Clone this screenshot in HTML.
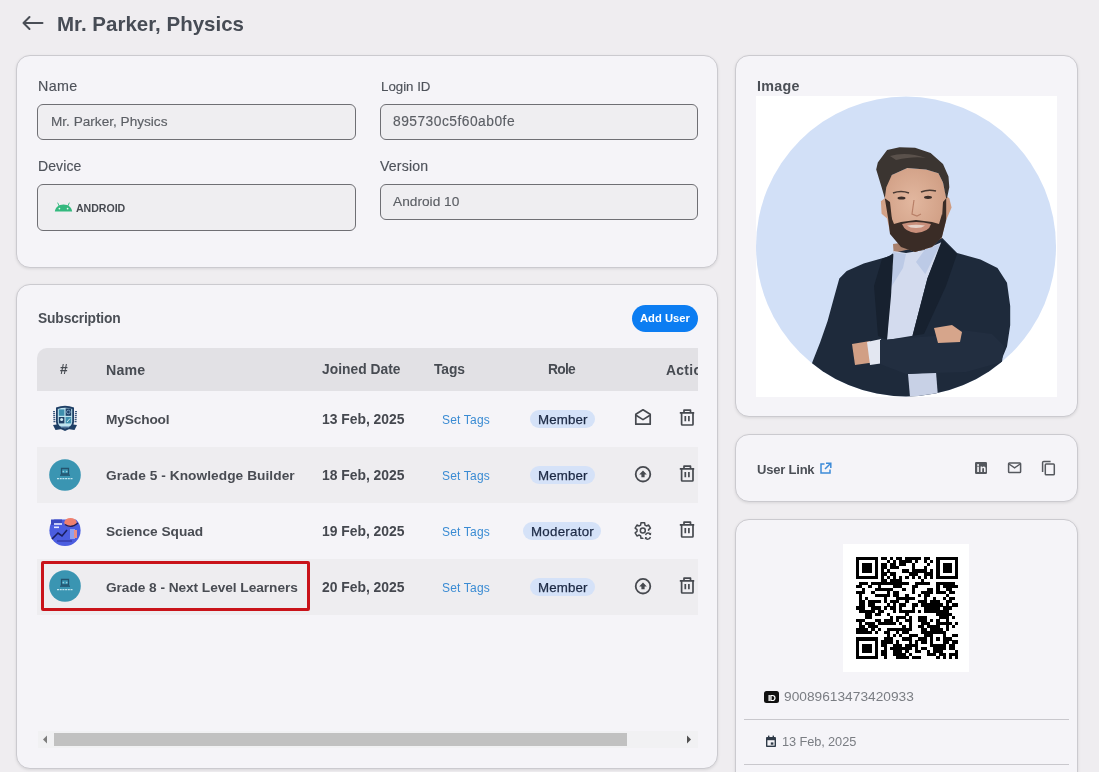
<!DOCTYPE html>
<html><head><meta charset="utf-8"><style>
*{box-sizing:border-box;margin:0;padding:0}
html,body{width:1099px;height:772px;overflow:hidden;background:#efedf0;font-family:"Liberation Sans",sans-serif}
.a{position:absolute}
.t{position:absolute;white-space:nowrap;line-height:1;will-change:transform}
.card{position:absolute;background:#f5f4f8;border:1px solid #cbcacf;border-radius:14px;box-shadow:0 1px 3px rgba(0,0,0,.10)}
.inp{position:absolute;background:#efeef1;border:1px solid #6f6f74;border-radius:6px}
.row{position:absolute;left:37px;width:661px;height:56px}
.chip{position:absolute;background:#d5e2f8;border-radius:9px;height:18px}
</style></head><body>
<svg class="a" style="left:21px;top:14px" width="24" height="18" viewBox="0 0 24 18"><path d="M21.5 9H2.5M8.5 3L2.5 9l6 6" fill="none" stroke="#4a4e56" stroke-width="2" stroke-linecap="round" stroke-linejoin="round"/></svg>
<div class="t" style="left:57.30px;top:14.15px;font-size:20.5px;font-weight:700;color:#474c55;letter-spacing:0.006px;">Mr. Parker, Physics</div>
<div class="card" style="left:16px;top:55px;width:702px;height:213px"></div>
<div class="t" style="left:37.90px;top:78.90px;font-size:14.3px;font-weight:400;color:#4e525a;letter-spacing:0.383px;-webkit-text-stroke:0.15px #4e525a;">Name</div>
<div class="inp" style="left:37px;top:104px;width:319px;height:36px"></div>
<div class="t" style="left:50.90px;top:115.39px;font-size:13.6px;font-weight:400;color:#5b5e64;letter-spacing:0.006px;-webkit-text-stroke:0.15px #5b5e64;">Mr. Parker, Physics</div>
<div class="t" style="left:380.50px;top:79.74px;font-size:13.3px;font-weight:400;color:#4e525a;letter-spacing:-0.007px;-webkit-text-stroke:0.15px #4e525a;">Login ID</div>
<div class="inp" style="left:380px;top:104px;width:318px;height:36px"></div>
<div class="t" style="left:393.30px;top:115.32px;font-size:13.8px;font-weight:400;color:#5b5e64;letter-spacing:0.483px;-webkit-text-stroke:0.15px #5b5e64;">895730c5f60ab0fe</div>
<div class="t" style="left:37.90px;top:158.85px;font-size:14.0px;font-weight:400;color:#4e525a;letter-spacing:0.100px;-webkit-text-stroke:0.15px #4e525a;">Device</div>
<div class="inp" style="left:37px;top:184px;width:319px;height:47px"></div>
<svg class="a" style="left:54px;top:201px" width="19" height="11" viewBox="0 0 19 11"><path d="M0.8 10.6C1.2 6.2 4.8 3.4 9.5 3.4S17.8 6.2 18.2 10.6Z" fill="#34b97f"/><path d="M5 4.6L3.8 2M14 4.6L15.2 2" stroke="#34b97f" stroke-width="0.9" stroke-linecap="round"/><circle cx="5.4" cy="7.6" r="0.85" fill="#eef6f1"/><circle cx="13.6" cy="7.6" r="0.85" fill="#eef6f1"/></svg>
<div class="t" style="left:76.10px;top:202.83px;font-size:10.6px;font-weight:700;color:#474a51;letter-spacing:-0.042px;">ANDROID</div>
<div class="t" style="left:380.40px;top:159.06px;font-size:14.1px;font-weight:400;color:#4e525a;letter-spacing:0.175px;-webkit-text-stroke:0.15px #4e525a;">Version</div>
<div class="inp" style="left:380px;top:184px;width:318px;height:36px"></div>
<div class="t" style="left:393.20px;top:195.40px;font-size:13.7px;font-weight:400;color:#5b5e64;letter-spacing:0.017px;-webkit-text-stroke:0.15px #5b5e64;">Android 10</div>
<div class="card" style="left:16px;top:284px;width:702px;height:485px"></div>
<div class="t" style="left:37.70px;top:311.72px;font-size:13.8px;font-weight:700;color:#4b4f56;letter-spacing:-0.141px;">Subscription</div>
<div class="a" style="left:632px;top:305px;width:66px;height:27px;border-radius:14px;background:#0c7df2"></div>
<div class="t" style="left:640.00px;top:313.42px;font-size:11.2px;font-weight:700;color:#ffffff;letter-spacing:0.029px;">Add User</div>
<div class="a" style="left:37px;top:348px;width:661px;height:43px;background:#e2e1e5;border-top-left-radius:10px"></div>
<div class="t" style="left:59.70px;top:363.32px;font-size:13.8px;font-weight:700;color:#474b52;letter-spacing:0.000px;">#</div>
<div class="t" style="left:105.90px;top:362.98px;font-size:14.2px;font-weight:700;color:#474b52;letter-spacing:0.200px;">Name</div>
<div class="t" style="left:322.00px;top:363.32px;font-size:13.8px;font-weight:700;color:#474b52;letter-spacing:0.030px;">Joined Date</div>
<div class="t" style="left:433.70px;top:363.32px;font-size:13.8px;font-weight:700;color:#474b52;letter-spacing:-0.100px;">Tags</div>
<div class="t" style="left:548.20px;top:363.32px;font-size:13.8px;font-weight:700;color:#474b52;letter-spacing:-0.733px;">Role</div>
<div class="a" style="left:37px;top:348px;width:661px;height:42px;overflow:hidden">
<div class="t" style="left:629.10px;top:15.52px;font-size:13.8px;font-weight:700;color:#474b52;letter-spacing:0.35px">Action</div>
</div>
<div class="row" style="top:391px;background:#f5f4f8"></div>
<div class="row" style="top:447px;background:#eeedf0"></div>
<div class="row" style="top:503px;background:#f5f4f8"></div>
<div class="row" style="top:559px;background:#eeedf0"></div>
<div class="t" style="left:105.80px;top:412.80px;font-size:13.7px;font-weight:700;color:#494c53;letter-spacing:-0.143px;">MySchool</div>
<div class="t" style="left:322.00px;top:413.03px;font-size:13.9px;font-weight:700;color:#45484f;letter-spacing:-0.018px;">13 Feb, 2025</div>
<div class="t" style="left:442.00px;top:414.04px;font-size:12px;font-weight:400;color:#3a8bd3;letter-spacing:0.186px;">Set Tags</div>
<div class="chip" style="left:530px;top:410px;width:65px"></div>
<div class="t" style="left:537.50px;top:413.14px;font-size:13.3px;font-weight:400;color:#1d2a45;letter-spacing:0.140px;-webkit-text-stroke:0.25px #1d2a45;">Member</div>
<svg class="a" style="left:679px;top:409px" width="16" height="17" viewBox="0 0 16 17"><path d="M0.8 3.8H15.2M5 3.5V1.2H11.5V3.5M2.6 4V15.2C2.6 15.7 3 16 3.4 16H13.2C13.6 16 14 15.7 14 15.2V4M6.3 7V12.3M9.9 7V12.3" fill="none" stroke="#46494f" stroke-width="1.7" stroke-linejoin="round"/></svg>
<div class="t" style="left:105.80px;top:468.80px;font-size:13.7px;font-weight:700;color:#494c53;letter-spacing:0.060px;">Grade 5 - Knowledge Builder</div>
<div class="t" style="left:322.00px;top:469.03px;font-size:13.9px;font-weight:700;color:#45484f;letter-spacing:-0.018px;">18 Feb, 2025</div>
<div class="t" style="left:442.00px;top:470.04px;font-size:12px;font-weight:400;color:#3a8bd3;letter-spacing:0.186px;">Set Tags</div>
<div class="chip" style="left:530px;top:466px;width:65px"></div>
<div class="t" style="left:537.50px;top:469.14px;font-size:13.3px;font-weight:400;color:#1d2a45;letter-spacing:0.140px;-webkit-text-stroke:0.25px #1d2a45;">Member</div>
<svg class="a" style="left:679px;top:465px" width="16" height="17" viewBox="0 0 16 17"><path d="M0.8 3.8H15.2M5 3.5V1.2H11.5V3.5M2.6 4V15.2C2.6 15.7 3 16 3.4 16H13.2C13.6 16 14 15.7 14 15.2V4M6.3 7V12.3M9.9 7V12.3" fill="none" stroke="#46494f" stroke-width="1.7" stroke-linejoin="round"/></svg>
<div class="t" style="left:105.80px;top:524.80px;font-size:13.7px;font-weight:700;color:#494c53;letter-spacing:-0.013px;">Science Squad</div>
<div class="t" style="left:322.00px;top:525.03px;font-size:13.9px;font-weight:700;color:#45484f;letter-spacing:-0.018px;">19 Feb, 2025</div>
<div class="t" style="left:442.00px;top:526.04px;font-size:12px;font-weight:400;color:#3a8bd3;letter-spacing:0.186px;">Set Tags</div>
<div class="chip" style="left:523px;top:522px;width:78px"></div>
<div class="t" style="left:531.00px;top:525.14px;font-size:13.3px;font-weight:400;color:#1d2a45;letter-spacing:0.275px;-webkit-text-stroke:0.25px #1d2a45;">Moderator</div>
<svg class="a" style="left:679px;top:521px" width="16" height="17" viewBox="0 0 16 17"><path d="M0.8 3.8H15.2M5 3.5V1.2H11.5V3.5M2.6 4V15.2C2.6 15.7 3 16 3.4 16H13.2C13.6 16 14 15.7 14 15.2V4M6.3 7V12.3M9.9 7V12.3" fill="none" stroke="#46494f" stroke-width="1.7" stroke-linejoin="round"/></svg>
<div class="t" style="left:105.80px;top:580.80px;font-size:13.7px;font-weight:700;color:#494c53;letter-spacing:-0.050px;">Grade 8 - Next Level Learners</div>
<div class="t" style="left:322.00px;top:581.03px;font-size:13.9px;font-weight:700;color:#45484f;letter-spacing:-0.018px;">20 Feb, 2025</div>
<div class="t" style="left:442.00px;top:582.04px;font-size:12px;font-weight:400;color:#3a8bd3;letter-spacing:0.186px;">Set Tags</div>
<div class="chip" style="left:530px;top:578px;width:65px"></div>
<div class="t" style="left:537.50px;top:581.14px;font-size:13.3px;font-weight:400;color:#1d2a45;letter-spacing:0.140px;-webkit-text-stroke:0.25px #1d2a45;">Member</div>
<svg class="a" style="left:679px;top:577px" width="16" height="17" viewBox="0 0 16 17"><path d="M0.8 3.8H15.2M5 3.5V1.2H11.5V3.5M2.6 4V15.2C2.6 15.7 3 16 3.4 16H13.2C13.6 16 14 15.7 14 15.2V4M6.3 7V12.3M9.9 7V12.3" fill="none" stroke="#46494f" stroke-width="1.7" stroke-linejoin="round"/></svg>
<svg class="a" style="left:634px;top:408px" width="18" height="18" viewBox="0 0 18 18"><path d="M1.8 6.3L9 1.8L16.2 6.3V16.2H1.8Z" fill="none" stroke="#46494f" stroke-width="1.7" stroke-linejoin="round"/><path d="M2 7.2L9 11.6L16 7.2" fill="none" stroke="#46494f" stroke-width="1.7" stroke-linejoin="round"/></svg>
<svg class="a" style="left:634px;top:465px" width="18" height="18" viewBox="0 0 18 18"><circle cx="9" cy="9.2" r="7.3" fill="none" stroke="#46494f" stroke-width="1.8"/><path d="M9 5.6L5.2 9.6H7.4V12.3H10.6V9.6H12.8Z" fill="#46494f"/></svg>
<svg class="a" style="left:634px;top:577px" width="18" height="18" viewBox="0 0 18 18"><circle cx="9" cy="9.2" r="7.3" fill="none" stroke="#46494f" stroke-width="1.8"/><path d="M9 5.6L5.2 9.6H7.4V12.3H10.6V9.6H12.8Z" fill="#46494f"/></svg>
<svg class="a" style="left:630px;top:518px" width="26" height="26" viewBox="0 0 26 26"><defs><mask id="gm"><rect width="26" height="26" fill="#fff"/><circle cx="18" cy="18" r="5.2" fill="#000"/></mask></defs><g mask="url(#gm)"><path d="M10.63 7.12 L11.00 4.71 L14.60 4.71 L14.97 7.12 L16.37 7.93 L18.65 7.04 L20.45 10.16 L18.54 11.69 L18.54 13.31 L20.45 14.84 L18.65 17.96 L16.37 17.07 L14.97 17.88 L14.60 20.29 L11.00 20.29 L10.63 17.88 L9.23 17.07 L6.95 17.96 L5.15 14.84 L7.06 13.31 L7.06 11.69 L5.15 10.16 L6.95 7.04 L9.23 7.93Z" fill="none" stroke="#46494f" stroke-width="1.5" stroke-linejoin="round"/></g><circle cx="12.8" cy="12.5" r="2.5" fill="none" stroke="#46494f" stroke-width="1.5"/><path d="M15.6 17.2A2.7 2.7 0 0 1 20.6 16.4M20.4 19A2.7 2.7 0 0 1 15.4 19.8" fill="none" stroke="#46494f" stroke-width="1.4"/><path d="M21.2 14.6L21 17.2L18.6 16.6Z M14.8 21.6L15 19L17.4 19.6Z" fill="#46494f"/></svg>
<svg class="a" style="left:50px;top:403px" width="30" height="30" viewBox="0 0 30 30"><path d="M4 8L4.5 20M26 8L25.5 20" stroke="#3d5a80" stroke-width="2" stroke-dasharray="1.2 0.8"/><path d="M6 4.5Q15 1 24 4.5V19Q24 25 15 28Q6 25 6 19Z" fill="#1f3f66"/><path d="M7.8 6Q15 3.3 22.2 6V18.8Q22.2 23.6 15 26Q7.8 23.6 7.8 18.8Z" fill="#bfe3ef"/><rect x="8.8" y="6.4" width="5.6" height="6.4" fill="#3f8fae"/><rect x="15.6" y="5.4" width="5.6" height="7.4" fill="#1f3f66"/><rect x="8.8" y="14" width="5.6" height="6.4" fill="#1f3f66"/><rect x="15.6" y="14" width="5.6" height="6.4" fill="#3f8fae"/><circle cx="18.4" cy="9" r="1.8" fill="none" stroke="#8fb8d8" stroke-width="0.7"/><circle cx="11.6" cy="16.5" r="1.5" fill="#cfeaf3"/><path d="M17 19L20 15.5" stroke="#cfeaf3" stroke-width="1"/><path d="M3 22L7 21.5L9 24Q15 22.5 21 24L23 21.5L27 22L24.5 27L21 26.5Q15 24.8 9 26.5L5.5 27Z" fill="#1f3f66"/><rect x="11" y="23.2" width="8" height="1.2" fill="#8fb8d8"/></svg>
<svg class="a" style="left:49px;top:459px" width="32" height="32" viewBox="0 0 32 32"><circle cx="16" cy="16" r="15.8" fill="#3a95b2"/><path d="M12.5 9.5H19.5V15H12.5Z" fill="none" stroke="#24536e" stroke-width="1.3"/><path d="M11 16.2H21" stroke="#24536e" stroke-width="1.2"/><circle cx="14.3" cy="12.6" r="0.8" fill="#9ad0e0"/><circle cx="17.7" cy="12.6" r="0.8" fill="#9ad0e0"/><path d="M8 19.6H24" stroke="#bfe4ee" stroke-width="1.2" stroke-dasharray="2 0.7"/></svg>
<svg class="a" style="left:49px;top:570px" width="32" height="32" viewBox="0 0 32 32"><circle cx="16" cy="16" r="15.8" fill="#3a95b2"/><path d="M12.5 9.5H19.5V15H12.5Z" fill="none" stroke="#24536e" stroke-width="1.3"/><path d="M11 16.2H21" stroke="#24536e" stroke-width="1.2"/><circle cx="14.3" cy="12.6" r="0.8" fill="#9ad0e0"/><circle cx="17.7" cy="12.6" r="0.8" fill="#9ad0e0"/><path d="M8 19.6H24" stroke="#bfe4ee" stroke-width="1.2" stroke-dasharray="2 0.7"/></svg>
<svg class="a" style="left:48px;top:515px" width="34" height="32" viewBox="0 0 34 32"><defs><clipPath id="ssq"><rect x="0" y="4.5" width="34" height="30"/></clipPath></defs><g clip-path="url(#ssq)"><circle cx="17" cy="15.5" r="15.6" fill="#4b5de0"/><path d="M3 10H14V4H3Z" fill="#3a49c0"/><rect x="6" y="8" width="8" height="2" fill="#c7cdf7"/><rect x="6" y="11.5" width="5" height="1.6" fill="#e6e9ff"/><path d="M4 24L10 18L14 21L19 15" fill="none" stroke="#1b1f60" stroke-width="1.6"/><rect x="22" y="14" width="5" height="10" fill="#8fa0f0"/><rect x="26" y="15" width="3" height="8" fill="#e88f86"/><rect x="9" y="25" width="15" height="2" fill="#3a44b8"/></g><ellipse cx="22.5" cy="7.5" rx="6.2" ry="4.6" fill="#f0806e"/><path d="M17 9.5Q23 14 30 8" fill="none" stroke="#1c1f5e" stroke-width="1.3"/></svg>
<div class="a" style="left:41px;top:561px;width:269px;height:50px;border:3px solid #c9131a;border-radius:2px"></div>
<div class="a" style="left:38px;top:731px;width:660px;height:17px;background:#f1f1f3"></div>
<div class="a" style="left:54px;top:733px;width:573px;height:13px;background:#c1c1c1"></div>
<svg class="a" style="left:42px;top:735px" width="6" height="9" viewBox="0 0 6 9"><path d="M5 0.5V8.5L1 4.5Z" fill="#7d7d7d"/></svg>
<svg class="a" style="left:686px;top:735px" width="6" height="9" viewBox="0 0 6 9"><path d="M1 0.5V8.5L5 4.5Z" fill="#505050"/></svg>
<div class="card" style="left:735px;top:55px;width:343px;height:362px"></div>
<div class="t" style="left:756.60px;top:78.90px;font-size:14.3px;font-weight:700;color:#4b4f56;letter-spacing:0.262px;">Image</div>
<div class="a" style="left:756px;top:96px;width:301px;height:301px;background:#fff;overflow:hidden"><svg width="301" height="301" viewBox="0 0 301 301" style="position:absolute;left:0;top:0"><defs><clipPath id="pc"><circle cx="150" cy="150.5" r="150"/></clipPath><radialGradient id="sk" cx="0.45" cy="0.4" r="0.7"><stop offset="0" stop-color="#e2b79f"/><stop offset="1" stop-color="#c99479"/></radialGradient></defs><circle cx="150" cy="150.5" r="150" fill="#d2e0f7"/><g clip-path="url(#pc)">
<path d="M137 148L186 141L185 160L138 162Z" fill="#a9806c"/>
<path d="M137.4 157L133.2 160.2L107.7 167.6L90.7 175L83.3 182.5L78 201.6L71.6 225L64.2 246.2L56.7 265.3L48 290L60 305H242L245.7 263.2L251 250.4L254.2 229.2L254.2 210L251 186.7L241.5 171.9L224.5 163.4L201.1 157L186.3 142.1L170 150L150 154Z" fill="#1e2a3b"/>
<path d="M137.4 155L132.1 203.7L131 244L156.5 239.8L171.4 182.5L186 146L168 154L150 157Z" fill="#d3dbee"/>
<path d="M137.4 156L135.3 191L147 172L150 158Z M184.2 148.5L169.3 178.2L160 166L170 152Z" fill="#bccae6"/>
<path d="M131 244L135 200L137.4 158L126 163L118 190L122 240Z" fill="#17212f"/>
<path d="M186 144L171.4 182.5L156.5 239.8L168 238L190 190L201 158Z" fill="#17212f"/>
<path d="M152 278L154 301H182L180 276Z" fill="#c8d1e6"/>
<path d="M96 248L114 245L120 266L99 269Z" fill="#d19f85"/>
<path d="M111 246L125 243L128 267L114 269Z" fill="#e3e7f1"/>
<path d="M124 244L178 240L206 234L236 238L248 250L246 266L210 276L150 278L124 268Z" fill="#222e40"/>
<path d="M178 232L196 229L206 236L204 246L182 247Z" fill="#d6a58b"/>
<path d="M129.5 86L128.8 102.2L124.9 105.3L125.6 117.7L131.1 122.4L134 136L145 150L159 156L176 151L186 140L190.2 124L195.6 111.5L193.3 102.2L190 100L187 86.6L182.4 77.3L170 73.4L151.3 71.9L135.8 78.9Z" fill="url(#sk)"/>
<path d="M131.9 120.8L134 138L145 151L159 156L176 151L186 141L190.2 124L186 118L183 128L176 126L160 124L145 126L138 128L134 118Z" fill="#3a2c26"/>
<path d="M146 128Q160 124 175 128Q173 136 160 137Q149 136 146 128Z" fill="#c98f7b"/>
<path d="M151 129.5Q160 128 169 129.5Q166 132 160 132Q154 132 151 129.5Z" fill="#e6d2c8"/>
<path d="M120.2 73.4L121.8 66.4L131.1 54L143.5 51.2L159.1 51.7L174.6 57.1L187 68L192.5 80.4L193.3 91.3L191 102.2L190.2 102.2L187 86.6L182.4 77.3L170 73.4L151.3 71.9L135.8 78.9L130.3 91.3L128.8 102.2L125.6 91.3Z" fill="#3b3531"/>
<path d="M128.8 102.2L131.9 121L136 124L134 106Z M190.2 102.2L190.2 124L186 122L187 106Z" fill="#3a2c26"/><path d="M134 60Q150 55 170 62Q158 60 140 64Z" fill="#5a514b"/>
<path d="M137 97Q145 94 153 97" fill="none" stroke="#4a3a33" stroke-width="1.6"/><path d="M165 96Q172 93 180 95" fill="none" stroke="#4a3a33" stroke-width="1.6"/>
<ellipse cx="145.5" cy="102" rx="4" ry="1.6" fill="#3c2e29"/><ellipse cx="172" cy="101.3" rx="4" ry="1.6" fill="#3c2e29"/>
<path d="M158 104L156 118L161 120L165 118" fill="none" stroke="#b98068" stroke-width="1.2"/>
</g></svg>
</div>
<div class="card" style="left:735px;top:434px;width:343px;height:68px"></div>
<div class="t" style="left:756.60px;top:462.70px;font-size:13.0px;font-weight:700;color:#4b4f56;letter-spacing:-0.206px;">User Link</div>
<svg class="a" style="left:819px;top:462px" width="13" height="13" viewBox="0 0 13 13"><path d="M5.5 2H2V11H11V7.5" fill="none" stroke="#3d8bd8" stroke-width="1.5"/><path d="M7 1.2H11.8V6M11.5 1.5L6 7" fill="none" stroke="#3d8bd8" stroke-width="1.5"/></svg>
<svg class="a" style="left:974px;top:461px" width="14" height="14" viewBox="0 0 14 14"><rect x="1" y="1" width="12" height="12" rx="1.2" fill="#55585e"/><rect x="3.2" y="5.6" width="1.7" height="5.4" fill="#f4f3f7"/><circle cx="4.05" cy="3.9" r="1" fill="#f4f3f7"/><path d="M6.6 11V5.6H8.2V6.4C8.6 5.8 9.2 5.5 9.9 5.5C11.1 5.5 11.6 6.3 11.6 7.6V11H10V8C10 7.2 9.7 6.9 9.2 6.9C8.6 6.9 8.2 7.3 8.2 8V11Z" fill="#f4f3f7"/></svg>
<svg class="a" style="left:1007px;top:461px" width="15" height="13" viewBox="0 0 15 13"><rect x="1.6" y="2" width="12" height="9.6" rx="0.8" fill="none" stroke="#55585e" stroke-width="1.5"/><path d="M2 3L7.6 6.8L13.2 3" fill="none" stroke="#55585e" stroke-width="1.4"/></svg>
<svg class="a" style="left:1041px;top:460px" width="15" height="16" viewBox="0 0 15 16"><path d="M1.6 12V2.6C1.6 1.9 2.1 1.4 2.8 1.4H9.6" fill="none" stroke="#55585e" stroke-width="1.5"/><rect x="4.3" y="4" width="9" height="10.8" rx="0.9" fill="none" stroke="#55585e" stroke-width="1.5"/></svg>
<div class="card" style="left:735px;top:519px;width:343px;height:280px"></div>
<div class="a" style="left:843px;top:544px;width:126px;height:128px;background:#fff"><svg width="102" height="102" viewBox="0 0 33 33" style="position:absolute;left:13px;top:13px" shape-rendering="crispEdges"><g fill="#000"><rect x="0" y="0" width="1.02" height="1.02"/><rect x="1" y="0" width="1.02" height="1.02"/><rect x="2" y="0" width="1.02" height="1.02"/><rect x="3" y="0" width="1.02" height="1.02"/><rect x="4" y="0" width="1.02" height="1.02"/><rect x="5" y="0" width="1.02" height="1.02"/><rect x="6" y="0" width="1.02" height="1.02"/><rect x="8" y="0" width="1.02" height="1.02"/><rect x="9" y="0" width="1.02" height="1.02"/><rect x="11" y="0" width="1.02" height="1.02"/><rect x="13" y="0" width="1.02" height="1.02"/><rect x="14" y="0" width="1.02" height="1.02"/><rect x="16" y="0" width="1.02" height="1.02"/><rect x="17" y="0" width="1.02" height="1.02"/><rect x="18" y="0" width="1.02" height="1.02"/><rect x="19" y="0" width="1.02" height="1.02"/><rect x="20" y="0" width="1.02" height="1.02"/><rect x="22" y="0" width="1.02" height="1.02"/><rect x="23" y="0" width="1.02" height="1.02"/><rect x="26" y="0" width="1.02" height="1.02"/><rect x="27" y="0" width="1.02" height="1.02"/><rect x="28" y="0" width="1.02" height="1.02"/><rect x="29" y="0" width="1.02" height="1.02"/><rect x="30" y="0" width="1.02" height="1.02"/><rect x="31" y="0" width="1.02" height="1.02"/><rect x="32" y="0" width="1.02" height="1.02"/><rect x="0" y="1" width="1.02" height="1.02"/><rect x="6" y="1" width="1.02" height="1.02"/><rect x="10" y="1" width="1.02" height="1.02"/><rect x="12" y="1" width="1.02" height="1.02"/><rect x="14" y="1" width="1.02" height="1.02"/><rect x="15" y="1" width="1.02" height="1.02"/><rect x="16" y="1" width="1.02" height="1.02"/><rect x="17" y="1" width="1.02" height="1.02"/><rect x="19" y="1" width="1.02" height="1.02"/><rect x="22" y="1" width="1.02" height="1.02"/><rect x="24" y="1" width="1.02" height="1.02"/><rect x="26" y="1" width="1.02" height="1.02"/><rect x="32" y="1" width="1.02" height="1.02"/><rect x="0" y="2" width="1.02" height="1.02"/><rect x="2" y="2" width="1.02" height="1.02"/><rect x="3" y="2" width="1.02" height="1.02"/><rect x="4" y="2" width="1.02" height="1.02"/><rect x="6" y="2" width="1.02" height="1.02"/><rect x="8" y="2" width="1.02" height="1.02"/><rect x="9" y="2" width="1.02" height="1.02"/><rect x="11" y="2" width="1.02" height="1.02"/><rect x="12" y="2" width="1.02" height="1.02"/><rect x="14" y="2" width="1.02" height="1.02"/><rect x="15" y="2" width="1.02" height="1.02"/><rect x="18" y="2" width="1.02" height="1.02"/><rect x="23" y="2" width="1.02" height="1.02"/><rect x="26" y="2" width="1.02" height="1.02"/><rect x="28" y="2" width="1.02" height="1.02"/><rect x="29" y="2" width="1.02" height="1.02"/><rect x="30" y="2" width="1.02" height="1.02"/><rect x="32" y="2" width="1.02" height="1.02"/><rect x="0" y="3" width="1.02" height="1.02"/><rect x="2" y="3" width="1.02" height="1.02"/><rect x="3" y="3" width="1.02" height="1.02"/><rect x="4" y="3" width="1.02" height="1.02"/><rect x="6" y="3" width="1.02" height="1.02"/><rect x="8" y="3" width="1.02" height="1.02"/><rect x="9" y="3" width="1.02" height="1.02"/><rect x="11" y="3" width="1.02" height="1.02"/><rect x="12" y="3" width="1.02" height="1.02"/><rect x="13" y="3" width="1.02" height="1.02"/><rect x="18" y="3" width="1.02" height="1.02"/><rect x="22" y="3" width="1.02" height="1.02"/><rect x="26" y="3" width="1.02" height="1.02"/><rect x="28" y="3" width="1.02" height="1.02"/><rect x="29" y="3" width="1.02" height="1.02"/><rect x="30" y="3" width="1.02" height="1.02"/><rect x="32" y="3" width="1.02" height="1.02"/><rect x="0" y="4" width="1.02" height="1.02"/><rect x="2" y="4" width="1.02" height="1.02"/><rect x="3" y="4" width="1.02" height="1.02"/><rect x="4" y="4" width="1.02" height="1.02"/><rect x="6" y="4" width="1.02" height="1.02"/><rect x="8" y="4" width="1.02" height="1.02"/><rect x="10" y="4" width="1.02" height="1.02"/><rect x="15" y="4" width="1.02" height="1.02"/><rect x="16" y="4" width="1.02" height="1.02"/><rect x="18" y="4" width="1.02" height="1.02"/><rect x="19" y="4" width="1.02" height="1.02"/><rect x="20" y="4" width="1.02" height="1.02"/><rect x="21" y="4" width="1.02" height="1.02"/><rect x="22" y="4" width="1.02" height="1.02"/><rect x="24" y="4" width="1.02" height="1.02"/><rect x="26" y="4" width="1.02" height="1.02"/><rect x="28" y="4" width="1.02" height="1.02"/><rect x="29" y="4" width="1.02" height="1.02"/><rect x="30" y="4" width="1.02" height="1.02"/><rect x="32" y="4" width="1.02" height="1.02"/><rect x="0" y="5" width="1.02" height="1.02"/><rect x="6" y="5" width="1.02" height="1.02"/><rect x="8" y="5" width="1.02" height="1.02"/><rect x="9" y="5" width="1.02" height="1.02"/><rect x="11" y="5" width="1.02" height="1.02"/><rect x="12" y="5" width="1.02" height="1.02"/><rect x="17" y="5" width="1.02" height="1.02"/><rect x="18" y="5" width="1.02" height="1.02"/><rect x="19" y="5" width="1.02" height="1.02"/><rect x="22" y="5" width="1.02" height="1.02"/><rect x="23" y="5" width="1.02" height="1.02"/><rect x="24" y="5" width="1.02" height="1.02"/><rect x="26" y="5" width="1.02" height="1.02"/><rect x="32" y="5" width="1.02" height="1.02"/><rect x="0" y="6" width="1.02" height="1.02"/><rect x="1" y="6" width="1.02" height="1.02"/><rect x="2" y="6" width="1.02" height="1.02"/><rect x="3" y="6" width="1.02" height="1.02"/><rect x="4" y="6" width="1.02" height="1.02"/><rect x="5" y="6" width="1.02" height="1.02"/><rect x="6" y="6" width="1.02" height="1.02"/><rect x="8" y="6" width="1.02" height="1.02"/><rect x="10" y="6" width="1.02" height="1.02"/><rect x="12" y="6" width="1.02" height="1.02"/><rect x="14" y="6" width="1.02" height="1.02"/><rect x="16" y="6" width="1.02" height="1.02"/><rect x="18" y="6" width="1.02" height="1.02"/><rect x="20" y="6" width="1.02" height="1.02"/><rect x="22" y="6" width="1.02" height="1.02"/><rect x="24" y="6" width="1.02" height="1.02"/><rect x="26" y="6" width="1.02" height="1.02"/><rect x="27" y="6" width="1.02" height="1.02"/><rect x="28" y="6" width="1.02" height="1.02"/><rect x="29" y="6" width="1.02" height="1.02"/><rect x="30" y="6" width="1.02" height="1.02"/><rect x="31" y="6" width="1.02" height="1.02"/><rect x="32" y="6" width="1.02" height="1.02"/><rect x="8" y="7" width="1.02" height="1.02"/><rect x="9" y="7" width="1.02" height="1.02"/><rect x="11" y="7" width="1.02" height="1.02"/><rect x="12" y="7" width="1.02" height="1.02"/><rect x="13" y="7" width="1.02" height="1.02"/><rect x="14" y="7" width="1.02" height="1.02"/><rect x="21" y="7" width="1.02" height="1.02"/><rect x="1" y="8" width="1.02" height="1.02"/><rect x="2" y="8" width="1.02" height="1.02"/><rect x="3" y="8" width="1.02" height="1.02"/><rect x="5" y="8" width="1.02" height="1.02"/><rect x="6" y="8" width="1.02" height="1.02"/><rect x="7" y="8" width="1.02" height="1.02"/><rect x="8" y="8" width="1.02" height="1.02"/><rect x="9" y="8" width="1.02" height="1.02"/><rect x="10" y="8" width="1.02" height="1.02"/><rect x="11" y="8" width="1.02" height="1.02"/><rect x="12" y="8" width="1.02" height="1.02"/><rect x="13" y="8" width="1.02" height="1.02"/><rect x="14" y="8" width="1.02" height="1.02"/><rect x="15" y="8" width="1.02" height="1.02"/><rect x="16" y="8" width="1.02" height="1.02"/><rect x="19" y="8" width="1.02" height="1.02"/><rect x="20" y="8" width="1.02" height="1.02"/><rect x="21" y="8" width="1.02" height="1.02"/><rect x="22" y="8" width="1.02" height="1.02"/><rect x="23" y="8" width="1.02" height="1.02"/><rect x="26" y="8" width="1.02" height="1.02"/><rect x="27" y="8" width="1.02" height="1.02"/><rect x="28" y="8" width="1.02" height="1.02"/><rect x="29" y="8" width="1.02" height="1.02"/><rect x="30" y="8" width="1.02" height="1.02"/><rect x="31" y="8" width="1.02" height="1.02"/><rect x="0" y="9" width="1.02" height="1.02"/><rect x="1" y="9" width="1.02" height="1.02"/><rect x="4" y="9" width="1.02" height="1.02"/><rect x="7" y="9" width="1.02" height="1.02"/><rect x="12" y="9" width="1.02" height="1.02"/><rect x="13" y="9" width="1.02" height="1.02"/><rect x="14" y="9" width="1.02" height="1.02"/><rect x="18" y="9" width="1.02" height="1.02"/><rect x="19" y="9" width="1.02" height="1.02"/><rect x="26" y="9" width="1.02" height="1.02"/><rect x="28" y="9" width="1.02" height="1.02"/><rect x="29" y="9" width="1.02" height="1.02"/><rect x="30" y="9" width="1.02" height="1.02"/><rect x="31" y="9" width="1.02" height="1.02"/><rect x="32" y="9" width="1.02" height="1.02"/><rect x="2" y="10" width="1.02" height="1.02"/><rect x="6" y="10" width="1.02" height="1.02"/><rect x="7" y="10" width="1.02" height="1.02"/><rect x="8" y="10" width="1.02" height="1.02"/><rect x="9" y="10" width="1.02" height="1.02"/><rect x="10" y="10" width="1.02" height="1.02"/><rect x="11" y="10" width="1.02" height="1.02"/><rect x="15" y="10" width="1.02" height="1.02"/><rect x="18" y="10" width="1.02" height="1.02"/><rect x="23" y="10" width="1.02" height="1.02"/><rect x="24" y="10" width="1.02" height="1.02"/><rect x="26" y="10" width="1.02" height="1.02"/><rect x="29" y="10" width="1.02" height="1.02"/><rect x="30" y="10" width="1.02" height="1.02"/><rect x="0" y="11" width="1.02" height="1.02"/><rect x="1" y="11" width="1.02" height="1.02"/><rect x="2" y="11" width="1.02" height="1.02"/><rect x="5" y="11" width="1.02" height="1.02"/><rect x="10" y="11" width="1.02" height="1.02"/><rect x="12" y="11" width="1.02" height="1.02"/><rect x="13" y="11" width="1.02" height="1.02"/><rect x="18" y="11" width="1.02" height="1.02"/><rect x="21" y="11" width="1.02" height="1.02"/><rect x="22" y="11" width="1.02" height="1.02"/><rect x="23" y="11" width="1.02" height="1.02"/><rect x="24" y="11" width="1.02" height="1.02"/><rect x="26" y="11" width="1.02" height="1.02"/><rect x="27" y="11" width="1.02" height="1.02"/><rect x="28" y="11" width="1.02" height="1.02"/><rect x="30" y="11" width="1.02" height="1.02"/><rect x="31" y="11" width="1.02" height="1.02"/><rect x="1" y="12" width="1.02" height="1.02"/><rect x="6" y="12" width="1.02" height="1.02"/><rect x="7" y="12" width="1.02" height="1.02"/><rect x="8" y="12" width="1.02" height="1.02"/><rect x="9" y="12" width="1.02" height="1.02"/><rect x="10" y="12" width="1.02" height="1.02"/><rect x="12" y="12" width="1.02" height="1.02"/><rect x="13" y="12" width="1.02" height="1.02"/><rect x="16" y="12" width="1.02" height="1.02"/><rect x="20" y="12" width="1.02" height="1.02"/><rect x="22" y="12" width="1.02" height="1.02"/><rect x="23" y="12" width="1.02" height="1.02"/><rect x="29" y="12" width="1.02" height="1.02"/><rect x="1" y="13" width="1.02" height="1.02"/><rect x="3" y="13" width="1.02" height="1.02"/><rect x="9" y="13" width="1.02" height="1.02"/><rect x="13" y="13" width="1.02" height="1.02"/><rect x="14" y="13" width="1.02" height="1.02"/><rect x="15" y="13" width="1.02" height="1.02"/><rect x="16" y="13" width="1.02" height="1.02"/><rect x="17" y="13" width="1.02" height="1.02"/><rect x="18" y="13" width="1.02" height="1.02"/><rect x="22" y="13" width="1.02" height="1.02"/><rect x="25" y="13" width="1.02" height="1.02"/><rect x="28" y="13" width="1.02" height="1.02"/><rect x="30" y="13" width="1.02" height="1.02"/><rect x="31" y="13" width="1.02" height="1.02"/><rect x="1" y="14" width="1.02" height="1.02"/><rect x="2" y="14" width="1.02" height="1.02"/><rect x="4" y="14" width="1.02" height="1.02"/><rect x="5" y="14" width="1.02" height="1.02"/><rect x="6" y="14" width="1.02" height="1.02"/><rect x="7" y="14" width="1.02" height="1.02"/><rect x="9" y="14" width="1.02" height="1.02"/><rect x="11" y="14" width="1.02" height="1.02"/><rect x="12" y="14" width="1.02" height="1.02"/><rect x="13" y="14" width="1.02" height="1.02"/><rect x="16" y="14" width="1.02" height="1.02"/><rect x="20" y="14" width="1.02" height="1.02"/><rect x="21" y="14" width="1.02" height="1.02"/><rect x="22" y="14" width="1.02" height="1.02"/><rect x="24" y="14" width="1.02" height="1.02"/><rect x="25" y="14" width="1.02" height="1.02"/><rect x="26" y="14" width="1.02" height="1.02"/><rect x="29" y="14" width="1.02" height="1.02"/><rect x="30" y="14" width="1.02" height="1.02"/><rect x="1" y="15" width="1.02" height="1.02"/><rect x="2" y="15" width="1.02" height="1.02"/><rect x="4" y="15" width="1.02" height="1.02"/><rect x="5" y="15" width="1.02" height="1.02"/><rect x="10" y="15" width="1.02" height="1.02"/><rect x="12" y="15" width="1.02" height="1.02"/><rect x="14" y="15" width="1.02" height="1.02"/><rect x="15" y="15" width="1.02" height="1.02"/><rect x="18" y="15" width="1.02" height="1.02"/><rect x="19" y="15" width="1.02" height="1.02"/><rect x="21" y="15" width="1.02" height="1.02"/><rect x="22" y="15" width="1.02" height="1.02"/><rect x="23" y="15" width="1.02" height="1.02"/><rect x="24" y="15" width="1.02" height="1.02"/><rect x="25" y="15" width="1.02" height="1.02"/><rect x="26" y="15" width="1.02" height="1.02"/><rect x="27" y="15" width="1.02" height="1.02"/><rect x="29" y="15" width="1.02" height="1.02"/><rect x="31" y="15" width="1.02" height="1.02"/><rect x="32" y="15" width="1.02" height="1.02"/><rect x="0" y="16" width="1.02" height="1.02"/><rect x="1" y="16" width="1.02" height="1.02"/><rect x="2" y="16" width="1.02" height="1.02"/><rect x="5" y="16" width="1.02" height="1.02"/><rect x="6" y="16" width="1.02" height="1.02"/><rect x="7" y="16" width="1.02" height="1.02"/><rect x="9" y="16" width="1.02" height="1.02"/><rect x="11" y="16" width="1.02" height="1.02"/><rect x="12" y="16" width="1.02" height="1.02"/><rect x="14" y="16" width="1.02" height="1.02"/><rect x="18" y="16" width="1.02" height="1.02"/><rect x="22" y="16" width="1.02" height="1.02"/><rect x="23" y="16" width="1.02" height="1.02"/><rect x="24" y="16" width="1.02" height="1.02"/><rect x="25" y="16" width="1.02" height="1.02"/><rect x="26" y="16" width="1.02" height="1.02"/><rect x="28" y="16" width="1.02" height="1.02"/><rect x="29" y="16" width="1.02" height="1.02"/><rect x="30" y="16" width="1.02" height="1.02"/><rect x="1" y="17" width="1.02" height="1.02"/><rect x="2" y="17" width="1.02" height="1.02"/><rect x="3" y="17" width="1.02" height="1.02"/><rect x="4" y="17" width="1.02" height="1.02"/><rect x="5" y="17" width="1.02" height="1.02"/><rect x="7" y="17" width="1.02" height="1.02"/><rect x="8" y="17" width="1.02" height="1.02"/><rect x="12" y="17" width="1.02" height="1.02"/><rect x="14" y="17" width="1.02" height="1.02"/><rect x="15" y="17" width="1.02" height="1.02"/><rect x="16" y="17" width="1.02" height="1.02"/><rect x="17" y="17" width="1.02" height="1.02"/><rect x="18" y="17" width="1.02" height="1.02"/><rect x="20" y="17" width="1.02" height="1.02"/><rect x="22" y="17" width="1.02" height="1.02"/><rect x="23" y="17" width="1.02" height="1.02"/><rect x="24" y="17" width="1.02" height="1.02"/><rect x="25" y="17" width="1.02" height="1.02"/><rect x="26" y="17" width="1.02" height="1.02"/><rect x="27" y="17" width="1.02" height="1.02"/><rect x="28" y="17" width="1.02" height="1.02"/><rect x="29" y="17" width="1.02" height="1.02"/><rect x="3" y="18" width="1.02" height="1.02"/><rect x="4" y="18" width="1.02" height="1.02"/><rect x="6" y="18" width="1.02" height="1.02"/><rect x="7" y="18" width="1.02" height="1.02"/><rect x="10" y="18" width="1.02" height="1.02"/><rect x="16" y="18" width="1.02" height="1.02"/><rect x="26" y="18" width="1.02" height="1.02"/><rect x="27" y="18" width="1.02" height="1.02"/><rect x="28" y="18" width="1.02" height="1.02"/><rect x="29" y="18" width="1.02" height="1.02"/><rect x="30" y="18" width="1.02" height="1.02"/><rect x="3" y="19" width="1.02" height="1.02"/><rect x="4" y="19" width="1.02" height="1.02"/><rect x="11" y="19" width="1.02" height="1.02"/><rect x="13" y="19" width="1.02" height="1.02"/><rect x="14" y="19" width="1.02" height="1.02"/><rect x="15" y="19" width="1.02" height="1.02"/><rect x="17" y="19" width="1.02" height="1.02"/><rect x="20" y="19" width="1.02" height="1.02"/><rect x="21" y="19" width="1.02" height="1.02"/><rect x="22" y="19" width="1.02" height="1.02"/><rect x="27" y="19" width="1.02" height="1.02"/><rect x="28" y="19" width="1.02" height="1.02"/><rect x="29" y="19" width="1.02" height="1.02"/><rect x="31" y="19" width="1.02" height="1.02"/><rect x="0" y="20" width="1.02" height="1.02"/><rect x="1" y="20" width="1.02" height="1.02"/><rect x="2" y="20" width="1.02" height="1.02"/><rect x="6" y="20" width="1.02" height="1.02"/><rect x="7" y="20" width="1.02" height="1.02"/><rect x="9" y="20" width="1.02" height="1.02"/><rect x="10" y="20" width="1.02" height="1.02"/><rect x="11" y="20" width="1.02" height="1.02"/><rect x="13" y="20" width="1.02" height="1.02"/><rect x="16" y="20" width="1.02" height="1.02"/><rect x="17" y="20" width="1.02" height="1.02"/><rect x="20" y="20" width="1.02" height="1.02"/><rect x="21" y="20" width="1.02" height="1.02"/><rect x="22" y="20" width="1.02" height="1.02"/><rect x="24" y="20" width="1.02" height="1.02"/><rect x="26" y="20" width="1.02" height="1.02"/><rect x="29" y="20" width="1.02" height="1.02"/><rect x="1" y="21" width="1.02" height="1.02"/><rect x="3" y="21" width="1.02" height="1.02"/><rect x="4" y="21" width="1.02" height="1.02"/><rect x="5" y="21" width="1.02" height="1.02"/><rect x="7" y="21" width="1.02" height="1.02"/><rect x="8" y="21" width="1.02" height="1.02"/><rect x="9" y="21" width="1.02" height="1.02"/><rect x="10" y="21" width="1.02" height="1.02"/><rect x="11" y="21" width="1.02" height="1.02"/><rect x="12" y="21" width="1.02" height="1.02"/><rect x="14" y="21" width="1.02" height="1.02"/><rect x="17" y="21" width="1.02" height="1.02"/><rect x="21" y="21" width="1.02" height="1.02"/><rect x="22" y="21" width="1.02" height="1.02"/><rect x="23" y="21" width="1.02" height="1.02"/><rect x="26" y="21" width="1.02" height="1.02"/><rect x="27" y="21" width="1.02" height="1.02"/><rect x="28" y="21" width="1.02" height="1.02"/><rect x="29" y="21" width="1.02" height="1.02"/><rect x="30" y="21" width="1.02" height="1.02"/><rect x="32" y="21" width="1.02" height="1.02"/><rect x="1" y="22" width="1.02" height="1.02"/><rect x="2" y="22" width="1.02" height="1.02"/><rect x="4" y="22" width="1.02" height="1.02"/><rect x="5" y="22" width="1.02" height="1.02"/><rect x="6" y="22" width="1.02" height="1.02"/><rect x="15" y="22" width="1.02" height="1.02"/><rect x="17" y="22" width="1.02" height="1.02"/><rect x="20" y="22" width="1.02" height="1.02"/><rect x="21" y="22" width="1.02" height="1.02"/><rect x="23" y="22" width="1.02" height="1.02"/><rect x="24" y="22" width="1.02" height="1.02"/><rect x="25" y="22" width="1.02" height="1.02"/><rect x="26" y="22" width="1.02" height="1.02"/><rect x="29" y="22" width="1.02" height="1.02"/><rect x="31" y="22" width="1.02" height="1.02"/><rect x="0" y="23" width="1.02" height="1.02"/><rect x="1" y="23" width="1.02" height="1.02"/><rect x="2" y="23" width="1.02" height="1.02"/><rect x="3" y="23" width="1.02" height="1.02"/><rect x="5" y="23" width="1.02" height="1.02"/><rect x="7" y="23" width="1.02" height="1.02"/><rect x="10" y="23" width="1.02" height="1.02"/><rect x="11" y="23" width="1.02" height="1.02"/><rect x="12" y="23" width="1.02" height="1.02"/><rect x="13" y="23" width="1.02" height="1.02"/><rect x="14" y="23" width="1.02" height="1.02"/><rect x="15" y="23" width="1.02" height="1.02"/><rect x="16" y="23" width="1.02" height="1.02"/><rect x="17" y="23" width="1.02" height="1.02"/><rect x="21" y="23" width="1.02" height="1.02"/><rect x="22" y="23" width="1.02" height="1.02"/><rect x="24" y="23" width="1.02" height="1.02"/><rect x="25" y="23" width="1.02" height="1.02"/><rect x="26" y="23" width="1.02" height="1.02"/><rect x="27" y="23" width="1.02" height="1.02"/><rect x="29" y="23" width="1.02" height="1.02"/><rect x="0" y="24" width="1.02" height="1.02"/><rect x="1" y="24" width="1.02" height="1.02"/><rect x="2" y="24" width="1.02" height="1.02"/><rect x="3" y="24" width="1.02" height="1.02"/><rect x="4" y="24" width="1.02" height="1.02"/><rect x="6" y="24" width="1.02" height="1.02"/><rect x="9" y="24" width="1.02" height="1.02"/><rect x="10" y="24" width="1.02" height="1.02"/><rect x="13" y="24" width="1.02" height="1.02"/><rect x="15" y="24" width="1.02" height="1.02"/><rect x="16" y="24" width="1.02" height="1.02"/><rect x="21" y="24" width="1.02" height="1.02"/><rect x="22" y="24" width="1.02" height="1.02"/><rect x="23" y="24" width="1.02" height="1.02"/><rect x="24" y="24" width="1.02" height="1.02"/><rect x="25" y="24" width="1.02" height="1.02"/><rect x="26" y="24" width="1.02" height="1.02"/><rect x="27" y="24" width="1.02" height="1.02"/><rect x="28" y="24" width="1.02" height="1.02"/><rect x="10" y="25" width="1.02" height="1.02"/><rect x="12" y="25" width="1.02" height="1.02"/><rect x="14" y="25" width="1.02" height="1.02"/><rect x="17" y="25" width="1.02" height="1.02"/><rect x="18" y="25" width="1.02" height="1.02"/><rect x="19" y="25" width="1.02" height="1.02"/><rect x="22" y="25" width="1.02" height="1.02"/><rect x="23" y="25" width="1.02" height="1.02"/><rect x="24" y="25" width="1.02" height="1.02"/><rect x="28" y="25" width="1.02" height="1.02"/><rect x="31" y="25" width="1.02" height="1.02"/><rect x="32" y="25" width="1.02" height="1.02"/><rect x="0" y="26" width="1.02" height="1.02"/><rect x="1" y="26" width="1.02" height="1.02"/><rect x="2" y="26" width="1.02" height="1.02"/><rect x="3" y="26" width="1.02" height="1.02"/><rect x="4" y="26" width="1.02" height="1.02"/><rect x="5" y="26" width="1.02" height="1.02"/><rect x="6" y="26" width="1.02" height="1.02"/><rect x="9" y="26" width="1.02" height="1.02"/><rect x="10" y="26" width="1.02" height="1.02"/><rect x="11" y="26" width="1.02" height="1.02"/><rect x="15" y="26" width="1.02" height="1.02"/><rect x="16" y="26" width="1.02" height="1.02"/><rect x="17" y="26" width="1.02" height="1.02"/><rect x="20" y="26" width="1.02" height="1.02"/><rect x="21" y="26" width="1.02" height="1.02"/><rect x="22" y="26" width="1.02" height="1.02"/><rect x="24" y="26" width="1.02" height="1.02"/><rect x="26" y="26" width="1.02" height="1.02"/><rect x="28" y="26" width="1.02" height="1.02"/><rect x="29" y="26" width="1.02" height="1.02"/><rect x="30" y="26" width="1.02" height="1.02"/><rect x="0" y="27" width="1.02" height="1.02"/><rect x="6" y="27" width="1.02" height="1.02"/><rect x="8" y="27" width="1.02" height="1.02"/><rect x="9" y="27" width="1.02" height="1.02"/><rect x="10" y="27" width="1.02" height="1.02"/><rect x="11" y="27" width="1.02" height="1.02"/><rect x="13" y="27" width="1.02" height="1.02"/><rect x="17" y="27" width="1.02" height="1.02"/><rect x="19" y="27" width="1.02" height="1.02"/><rect x="21" y="27" width="1.02" height="1.02"/><rect x="22" y="27" width="1.02" height="1.02"/><rect x="24" y="27" width="1.02" height="1.02"/><rect x="28" y="27" width="1.02" height="1.02"/><rect x="29" y="27" width="1.02" height="1.02"/><rect x="31" y="27" width="1.02" height="1.02"/><rect x="32" y="27" width="1.02" height="1.02"/><rect x="0" y="28" width="1.02" height="1.02"/><rect x="2" y="28" width="1.02" height="1.02"/><rect x="3" y="28" width="1.02" height="1.02"/><rect x="4" y="28" width="1.02" height="1.02"/><rect x="6" y="28" width="1.02" height="1.02"/><rect x="8" y="28" width="1.02" height="1.02"/><rect x="9" y="28" width="1.02" height="1.02"/><rect x="12" y="28" width="1.02" height="1.02"/><rect x="13" y="28" width="1.02" height="1.02"/><rect x="14" y="28" width="1.02" height="1.02"/><rect x="16" y="28" width="1.02" height="1.02"/><rect x="17" y="28" width="1.02" height="1.02"/><rect x="18" y="28" width="1.02" height="1.02"/><rect x="19" y="28" width="1.02" height="1.02"/><rect x="24" y="28" width="1.02" height="1.02"/><rect x="25" y="28" width="1.02" height="1.02"/><rect x="26" y="28" width="1.02" height="1.02"/><rect x="27" y="28" width="1.02" height="1.02"/><rect x="28" y="28" width="1.02" height="1.02"/><rect x="30" y="28" width="1.02" height="1.02"/><rect x="31" y="28" width="1.02" height="1.02"/><rect x="0" y="29" width="1.02" height="1.02"/><rect x="2" y="29" width="1.02" height="1.02"/><rect x="3" y="29" width="1.02" height="1.02"/><rect x="4" y="29" width="1.02" height="1.02"/><rect x="6" y="29" width="1.02" height="1.02"/><rect x="9" y="29" width="1.02" height="1.02"/><rect x="11" y="29" width="1.02" height="1.02"/><rect x="12" y="29" width="1.02" height="1.02"/><rect x="13" y="29" width="1.02" height="1.02"/><rect x="14" y="29" width="1.02" height="1.02"/><rect x="15" y="29" width="1.02" height="1.02"/><rect x="16" y="29" width="1.02" height="1.02"/><rect x="17" y="29" width="1.02" height="1.02"/><rect x="19" y="29" width="1.02" height="1.02"/><rect x="21" y="29" width="1.02" height="1.02"/><rect x="22" y="29" width="1.02" height="1.02"/><rect x="25" y="29" width="1.02" height="1.02"/><rect x="26" y="29" width="1.02" height="1.02"/><rect x="27" y="29" width="1.02" height="1.02"/><rect x="28" y="29" width="1.02" height="1.02"/><rect x="30" y="29" width="1.02" height="1.02"/><rect x="31" y="29" width="1.02" height="1.02"/><rect x="0" y="30" width="1.02" height="1.02"/><rect x="2" y="30" width="1.02" height="1.02"/><rect x="3" y="30" width="1.02" height="1.02"/><rect x="4" y="30" width="1.02" height="1.02"/><rect x="6" y="30" width="1.02" height="1.02"/><rect x="8" y="30" width="1.02" height="1.02"/><rect x="9" y="30" width="1.02" height="1.02"/><rect x="12" y="30" width="1.02" height="1.02"/><rect x="13" y="30" width="1.02" height="1.02"/><rect x="14" y="30" width="1.02" height="1.02"/><rect x="16" y="30" width="1.02" height="1.02"/><rect x="19" y="30" width="1.02" height="1.02"/><rect x="20" y="30" width="1.02" height="1.02"/><rect x="23" y="30" width="1.02" height="1.02"/><rect x="25" y="30" width="1.02" height="1.02"/><rect x="26" y="30" width="1.02" height="1.02"/><rect x="27" y="30" width="1.02" height="1.02"/><rect x="32" y="30" width="1.02" height="1.02"/><rect x="0" y="31" width="1.02" height="1.02"/><rect x="6" y="31" width="1.02" height="1.02"/><rect x="8" y="31" width="1.02" height="1.02"/><rect x="9" y="31" width="1.02" height="1.02"/><rect x="12" y="31" width="1.02" height="1.02"/><rect x="13" y="31" width="1.02" height="1.02"/><rect x="14" y="31" width="1.02" height="1.02"/><rect x="15" y="31" width="1.02" height="1.02"/><rect x="17" y="31" width="1.02" height="1.02"/><rect x="23" y="31" width="1.02" height="1.02"/><rect x="24" y="31" width="1.02" height="1.02"/><rect x="25" y="31" width="1.02" height="1.02"/><rect x="27" y="31" width="1.02" height="1.02"/><rect x="28" y="31" width="1.02" height="1.02"/><rect x="30" y="31" width="1.02" height="1.02"/><rect x="31" y="31" width="1.02" height="1.02"/><rect x="32" y="31" width="1.02" height="1.02"/><rect x="0" y="32" width="1.02" height="1.02"/><rect x="1" y="32" width="1.02" height="1.02"/><rect x="2" y="32" width="1.02" height="1.02"/><rect x="3" y="32" width="1.02" height="1.02"/><rect x="4" y="32" width="1.02" height="1.02"/><rect x="5" y="32" width="1.02" height="1.02"/><rect x="6" y="32" width="1.02" height="1.02"/><rect x="9" y="32" width="1.02" height="1.02"/><rect x="13" y="32" width="1.02" height="1.02"/><rect x="14" y="32" width="1.02" height="1.02"/><rect x="15" y="32" width="1.02" height="1.02"/><rect x="16" y="32" width="1.02" height="1.02"/><rect x="18" y="32" width="1.02" height="1.02"/><rect x="19" y="32" width="1.02" height="1.02"/><rect x="20" y="32" width="1.02" height="1.02"/><rect x="26" y="32" width="1.02" height="1.02"/><rect x="28" y="32" width="1.02" height="1.02"/><rect x="30" y="32" width="1.02" height="1.02"/><rect x="32" y="32" width="1.02" height="1.02"/></g></svg></div>
<div class="a" style="left:764px;top:691px;width:15px;height:12px;border-radius:2.5px;background:#111"></div>
<div class="t" style="left:767.50px;top:694.00px;font-size:8.5px;font-weight:700;color:#ffffff;letter-spacing:-0.500px;">ID</div>
<div class="t" style="left:784.00px;top:690.30px;font-size:13.7px;font-weight:400;color:#7a7d83;letter-spacing:0.028px;">90089613473420933</div>
<div class="a" style="left:744px;top:719px;width:325px;height:1px;background:#c9c8cd"></div>
<svg class="a" style="left:765px;top:735px" width="12" height="13" viewBox="0 0 12 13"><path d="M1 3.2C1 2.5 1.5 2 2.2 2H9.8C10.5 2 11 2.5 11 3.2V11C11 11.6 10.5 12 9.8 12H2.2C1.5 12 1 11.6 1 11Z" fill="#2f3a48"/><rect x="2.4" y="5.2" width="7.2" height="5.4" fill="#f4f3f7"/><rect x="5.8" y="7.4" width="2.6" height="2.3" fill="#2f3a48"/><rect x="3" y="0.6" width="1.4" height="2.4" fill="#2f3a48"/><rect x="7.6" y="0.6" width="1.4" height="2.4" fill="#2f3a48"/></svg>
<div class="t" style="left:782.00px;top:735.86px;font-size:12.8px;font-weight:400;color:#7a7d83;letter-spacing:-0.105px;">13 Feb, 2025</div>
<div class="a" style="left:744px;top:764px;width:325px;height:1px;background:#c9c8cd"></div>
</body></html>
